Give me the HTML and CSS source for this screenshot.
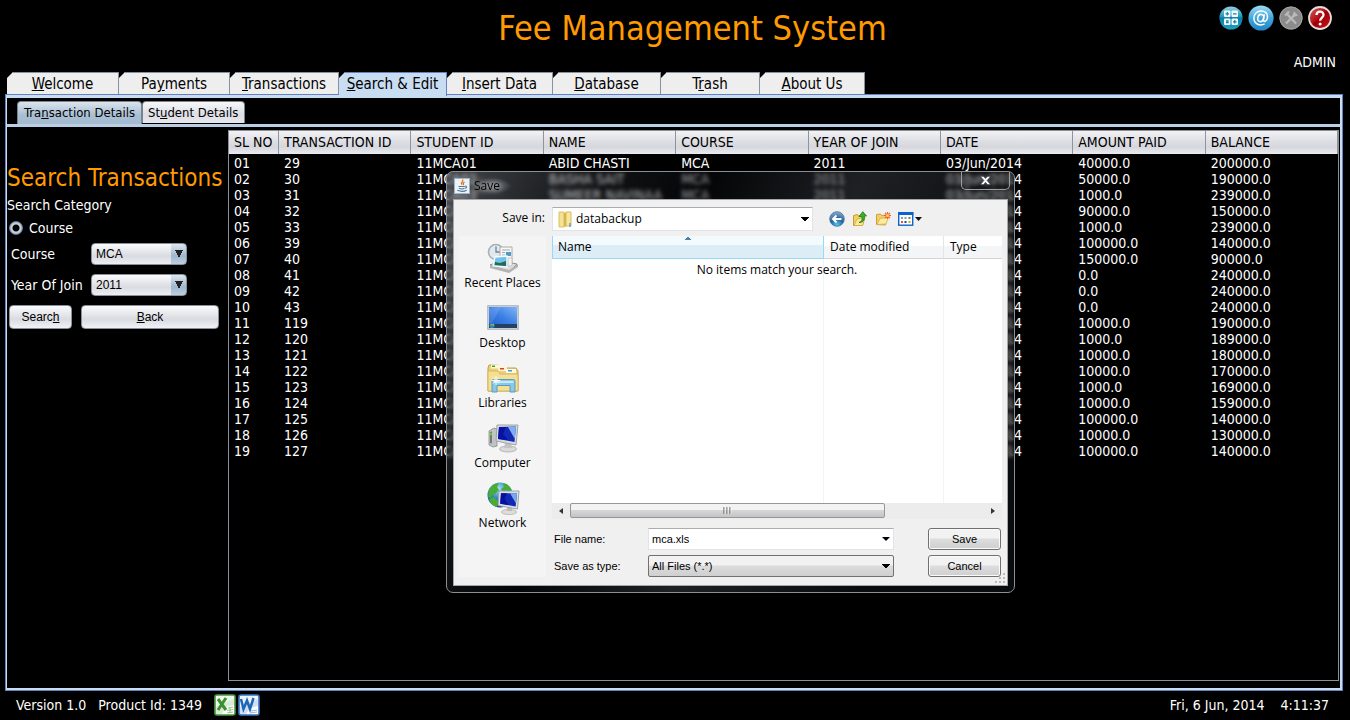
FILE: index.html
```html
<!DOCTYPE html>
<html lang="en">
<head>
<meta charset="utf-8">
<title>Fee Management System</title>
<link rel="stylesheet" href="styles.css">
</head>
<body>
<header class="top">
  <h1 class="title">Fee Management System</h1>
  <div class="tools">
    <button class="tool" type="button" aria-label="Calculator">
      <svg width="26" height="26" viewBox="0 0 26 26"><defs><linearGradient id="gc" x1="0" y1="0" x2="0" y2="1"><stop offset="0" stop-color="#8fd4e6"/><stop offset=".45" stop-color="#2294b8"/><stop offset=".5" stop-color="#0b7da6"/><stop offset="1" stop-color="#1ba3c6"/></linearGradient></defs><circle cx="13" cy="13" r="11.6" fill="url(#gc)"/><g fill="#f4fbfd"><rect x="6" y="5.500" width="6.500" height="6.500" rx="1"/><rect x="13.500" y="5.500" width="6.500" height="6.500" rx="1"/><rect x="6" y="13.500" width="6.500" height="6.500" rx="1"/><rect x="13.500" y="13.500" width="6.500" height="6.500" rx="1"/></g><path d="M7.500 8.800h3.600M9.300 7v3.600M15 8.800h3.600M15 16.800h3.600M16.800 15v3.600M8 16h2.700M8 17.700h2.700" stroke="#1784a9" stroke-width="1.300"/></svg>
    </button>
    <button class="tool" type="button" aria-label="Mail">
      <svg width="28" height="28" viewBox="0 0 28 28"><defs><linearGradient id="gm" x1="0" y1="0" x2="0" y2="1"><stop offset="0" stop-color="#9edcf8"/><stop offset=".5" stop-color="#42a7dc"/><stop offset="1" stop-color="#2385c6"/></linearGradient></defs><circle cx="14" cy="14" r="12.600" fill="url(#gm)"/><ellipse cx="13.700" cy="14" rx="2.900" ry="3.600" fill="none" stroke="#fff" stroke-width="1.500" transform="rotate(15 13.700 14)"/><path d="M17.300 10.300l-.9 5.300c-.3 2 1.300 2.200 2.500 1.100 3-3 1.900-9.300-4.300-9.700-4.700-.2-7.800 3.200-7.700 7.300.1 5.800 6.200 8.100 10.700 5.600" fill="none" stroke="#fff" stroke-width="1.500"/></svg>
    </button>
    <button class="tool" type="button" aria-label="Settings">
      <svg width="26" height="26" viewBox="0 0 26 26"><circle cx="13" cy="13" r="11.600" fill="#8b8b8b"/><circle cx="13" cy="13" r="11" fill="none" stroke="#a2a2a2"/><path d="M8 18.500l9-9M8.500 8.500l9.500 10" stroke="#b9b9b9" stroke-width="2.400"/><path d="M6.500 9.500l3.500-3.500 2 1-4.500 4.500zM16 6.200l-1.400 4 1.500 1.600 4-1.400" fill="#b9b9b9"/></svg>
    </button>
    <button class="tool" type="button" aria-label="Help">
      <svg width="26" height="26" viewBox="0 0 26 26"><defs><linearGradient id="gh" x1="0" y1="0" x2="1" y2="1"><stop offset="0" stop-color="#c66"/><stop offset=".45" stop-color="#b70d12"/><stop offset=".5" stop-color="#9b0006"/><stop offset="1" stop-color="#d4141a"/></linearGradient></defs><circle cx="13" cy="13" r="11" fill="url(#gh)" stroke="#e4dcdc" stroke-width="1.800"/><path d="M9.500 10c.2-4.700 7.200-4.400 7 0-.1 2.600-3.300 2.600-3.400 5.700" fill="none" stroke="#fff" stroke-width="2.300"/><circle cx="13.100" cy="18.900" r="1.500" fill="#fff"/></svg>
    </button>
  </div>
  <div class="user">ADMIN</div>
</header>

<nav class="tabs" role="tablist" aria-label="Sections">
  <button class="tab" role="tab" type="button"><u>W</u>elcome</button>
  <button class="tab" role="tab" type="button">Pa<u>y</u>ments</button>
  <button class="tab" role="tab" type="button"><u>T</u>ransactions</button>
  <button class="tab tab-on" role="tab" type="button" aria-selected="true"><u>S</u>earch &amp; Edit</button>
  <button class="tab" role="tab" type="button"><u>I</u>nsert Data</button>
  <button class="tab" role="tab" type="button"><u>D</u>atabase</button>
  <button class="tab" role="tab" type="button">T<u>r</u>ash</button>
  <button class="tab" role="tab" type="button"><u>A</u>bout Us</button>
</nav>

<main class="pane">
  <div class="subtabs" role="tablist" aria-label="Details">
    <button class="subtab subtab-on" role="tab" type="button" aria-selected="true">Tra<u>n</u>saction Details</button>
    <button class="subtab" role="tab" type="button">St<u>u</u>dent Details</button>
  </div>
  <div class="work">
    <form class="search">
      <h2 class="search-title">Search Transactions</h2>
      <p class="search-cat">Search Category</p>
      <label class="radio-row"><input class="radio" type="radio" name="category" checked>Course</label>
      <div class="field"><label for="course">Course</label><select class="combo" id="course"><option>MCA</option></select></div>
      <div class="field"><label for="year">Year Of Join</label><select class="combo" id="year"><option>2011</option></select></div>
      <div class="actions">
        <button class="btn btn-search" type="button">Searc<u>h</u></button>
        <button class="btn btn-back" type="button"><u>B</u>ack</button>
      </div>
    </form>
    <div class="grid-box">
      <table class="grid">
        <colgroup><col class="col-no"><col><col><col><col><col><col><col><col></colgroup>
        <thead><tr><th>SL NO</th><th>TRANSACTION ID</th><th>STUDENT ID</th><th>NAME</th><th>COURSE</th><th>YEAR OF JOIN</th><th>DATE</th><th>AMOUNT PAID</th><th>BALANCE</th></tr></thead>
        <tbody>
          <tr><td>01</td><td>29</td><td>11MCA01</td><td>ABID CHASTI</td><td>MCA</td><td>2011</td><td>03/Jun/2014</td><td>40000.0</td><td>200000.0</td></tr>
          <tr><td>02</td><td>30</td><td>11MCA02</td><td>BASHA SAIT</td><td>MCA</td><td>2011</td><td>03/Jun/2014</td><td>50000.0</td><td>190000.0</td></tr>
          <tr><td>03</td><td>31</td><td>11MCA03</td><td>SUMEER NAVINAA</td><td>MCA</td><td>2011</td><td>03/Jun/2014</td><td>1000.0</td><td>239000.0</td></tr>
          <tr><td>04</td><td>32</td><td>11MCA04</td><td></td><td>MCA</td><td>2011</td><td>03/Jun/2014</td><td>90000.0</td><td>150000.0</td></tr>
          <tr><td>05</td><td>33</td><td>11MCA05</td><td></td><td>MCA</td><td>2011</td><td>03/Jun/2014</td><td>1000.0</td><td>239000.0</td></tr>
          <tr><td>06</td><td>39</td><td>11MCA06</td><td></td><td>MCA</td><td>2011</td><td>03/Jun/2014</td><td>100000.0</td><td>140000.0</td></tr>
          <tr><td>07</td><td>40</td><td>11MCA07</td><td></td><td>MCA</td><td>2011</td><td>03/Jun/2014</td><td>150000.0</td><td>90000.0</td></tr>
          <tr><td>08</td><td>41</td><td>11MCA08</td><td></td><td>MCA</td><td>2011</td><td>03/Jun/2014</td><td>0.0</td><td>240000.0</td></tr>
          <tr><td>09</td><td>42</td><td>11MCA09</td><td></td><td>MCA</td><td>2011</td><td>03/Jun/2014</td><td>0.0</td><td>240000.0</td></tr>
          <tr><td>10</td><td>43</td><td>11MCA10</td><td></td><td>MCA</td><td>2011</td><td>03/Jun/2014</td><td>0.0</td><td>240000.0</td></tr>
          <tr><td>11</td><td>119</td><td>11MCA11</td><td></td><td>MCA</td><td>2011</td><td>03/Jun/2014</td><td>10000.0</td><td>190000.0</td></tr>
          <tr><td>12</td><td>120</td><td>11MCA12</td><td></td><td>MCA</td><td>2011</td><td>03/Jun/2014</td><td>1000.0</td><td>189000.0</td></tr>
          <tr><td>13</td><td>121</td><td>11MCA13</td><td></td><td>MCA</td><td>2011</td><td>03/Jun/2014</td><td>10000.0</td><td>180000.0</td></tr>
          <tr><td>14</td><td>122</td><td>11MCA14</td><td></td><td>MCA</td><td>2011</td><td>03/Jun/2014</td><td>10000.0</td><td>170000.0</td></tr>
          <tr><td>15</td><td>123</td><td>11MCA15</td><td></td><td>MCA</td><td>2011</td><td>03/Jun/2014</td><td>1000.0</td><td>169000.0</td></tr>
          <tr><td>16</td><td>124</td><td>11MCA16</td><td></td><td>MCA</td><td>2011</td><td>03/Jun/2014</td><td>10000.0</td><td>159000.0</td></tr>
          <tr><td>17</td><td>125</td><td>11MCA17</td><td></td><td>MCA</td><td>2011</td><td>03/Jun/2014</td><td>100000.0</td><td>140000.0</td></tr>
          <tr><td>18</td><td>126</td><td>11MCA18</td><td></td><td>MCA</td><td>2011</td><td>03/Jun/2014</td><td>10000.0</td><td>130000.0</td></tr>
          <tr><td>19</td><td>127</td><td>11MCA19</td><td></td><td>MCA</td><td>2011</td><td>03/Jun/2014</td><td>100000.0</td><td>140000.0</td></tr>
        </tbody>
      </table>
    </div>
  </div>
</main>

<footer class="status">
  <span>Version 1.0</span>
  <span>Product Id: 1349</span>
  <div class="exports">
    <button class="export" type="button" aria-label="Export to Excel"><svg width="22" height="22" viewBox="0 0 22 22"><rect x="1" y="1" width="20" height="20" rx="2" fill="#d7ecd2" stroke="#4c9a45" stroke-width="1.600"/><path d="M2 2h18v3l-18 8z" fill="#eef8ec"/><path d="M12 13l8-2v9H8z" fill="#fff"/><path d="M14 14l5-1M13 16.500l6-1M13 19l6-1M16 13v6" stroke="#7fb57a" stroke-width=".8"/><path d="M4 5l8 11M12 4L4 16" stroke="#3b9130" stroke-width="3"/></svg></button>
    <button class="export" type="button" aria-label="Export to Word"><svg width="22" height="22" viewBox="0 0 22 22"><rect x="1" y="1" width="20" height="20" rx="2" fill="#cfe0f5" stroke="#3c78bd" stroke-width="1.600"/><path d="M2 2h18v3l-18 8z" fill="#ecf4fd"/><path d="M12 14l8-2v8H8z" fill="#fff"/><path d="M13 17l6-1M12 19l7-1" stroke="#8cb1de" stroke-width=".9"/><path d="M3 5l2.500 10L9 6.500l3 8.500 3.500-11" fill="none" stroke="#1f66b4" stroke-width="2.500"/></svg></button>
  </div>
  <span class="date">Fri, 6 Jun, 2014</span>
  <span>4:11:37</span>
</footer>

<section class="dialog" role="dialog" aria-label="Save">
  <div class="dlg-title">
    <svg width="16" height="16" viewBox="0 0 16 16"><rect x=".5" y=".5" width="15" height="15" fill="#eef2f6" stroke="#9fb4c6"/><path d="M8.600 1.500c1.500 2-2.700 3-.8 5.200M10.600 4c-2.300 1-1.300 2-1 3.200" fill="none" stroke="#e5701c" stroke-width="1.300"/><path d="M4.500 8.500h6.300M5 10.200c1.500.8 4 .8 5.500 0M11 8.300c2-.6 2 1.600 0 2M3.300 12.300c3 1.300 7 1.200 9.300 0" fill="none" stroke="#4c7899" stroke-width="1.100"/></svg>
    <span class="dlg-name">Save</span>
    <button class="dlg-close" type="button" aria-label="Close"><svg width="11" height="9" viewBox="0 0 11 9"><path d="M.5.500h3L5.500 2.600 7.500.500h3L7 4.500l3.500 4h-3l-2-2.200-2 2.200h-3L4 4.500z" fill="#fff" stroke="#3a3d44" stroke-width=".5"/></svg></button>
  </div>
  <div class="dlg-body">
    <label class="in-label" for="folder">Save in:</label>
    <div class="in-row">
      <div class="folder-box">
        <svg width="15" height="17" viewBox="0 0 15 17"><path d="M1 1h5v15H1z" fill="#f4e193" stroke="#dcc169"/><path d="M6 2l3-1v14l-3 1z" fill="#d6b449"/><path d="M8 1h5v14H8z" fill="#f7e79f" stroke="#dabb58"/><path d="M12 12v4" stroke="#5aa5dc" stroke-width="1.500"/></svg>
        <select class="folder" id="folder"><option>databackup</option></select>
      </div>
      <div class="nav-icons">
        <button class="ico" type="button" aria-label="Back"><svg width="16" height="16" viewBox="0 0 16 16"><defs><radialGradient id="gb" cx=".5" cy=".9" r=".9"><stop offset="0" stop-color="#55c5ee"/><stop offset=".5" stop-color="#245f9e"/><stop offset="1" stop-color="#8fb1cc"/></radialGradient></defs><circle cx="8" cy="8" r="7.300" fill="url(#gb)" stroke="#466e94" stroke-width=".8"/><path d="M12.500 8H4M7.500 4.500L4 8l3.500 3.500" fill="none" stroke="#fff" stroke-width="2"/></svg></button>
        <button class="ico" type="button" aria-label="Up one level"><svg width="16" height="16" viewBox="0 0 16 16"><path d="M1.500 14.500v-10l4-1 1 1.500 5-1v3l1 .5-2 7z" fill="#f0cf66" stroke="#c99c2c"/><path d="M2 14.500l3-6.500 8-1.500-2.500 8z" fill="#fbe795" stroke="#d2aa40" stroke-width=".8"/><path d="M7 11.500c3-1 3.500-3 2.700-6H7L10.800.700 14.500 5h-2.200c.5 4-1 6.500-5.300 6.500z" fill="#39b02e" stroke="#167716" stroke-width=".8"/></svg></button>
        <button class="ico" type="button" aria-label="New folder"><svg width="16" height="16" viewBox="0 0 16 16"><path d="M1.500 13.500v-10l4-.5 1 1.500 5-.5v3l-1 7z" fill="#f0cf66" stroke="#d0a038"/><path d="M2 13.500l3-6 8.500-1-2.500 6.500z" fill="#fcea9e" stroke="#d7b04b" stroke-width=".8"/><path d="M12.500 1v7M9 4.500h7M10 2l5 5M15 2l-5 5" stroke="#f1602b" stroke-width="1.200"/><circle cx="12.500" cy="4.500" r="1.500" fill="#ffd36a"/></svg></button>
        <button class="ico" type="button" aria-label="Views"><svg width="24" height="16" viewBox="0 0 24 16"><rect x=".7" y="1.700" width="14" height="12.500" fill="#fff" stroke="#0d62d0" stroke-width="1.400"/><path d="M0 2.500h15.400" stroke="#0d62d0" stroke-width="3"/><path d="M3 6h2v2H3zM6.500 6h2v2h-2z" fill="#8aa0b8"/><path d="M10.500 6h2v2h-2z" fill="#4d9a37"/><path d="M3 10h2v2H3z" fill="#d65c2a"/><path d="M6.500 10h2v2h-2z" fill="#283f9e"/><path d="M10.500 10h2v2h-2z" fill="#d6a32a"/><path d="M17 6h7l-3.500 4z" fill="#111"/></svg></button>
      </div>
    </div>

    <nav class="places" aria-label="Places">
      <button class="place" type="button"><svg width="32" height="32" viewBox="0 0 32 32"><circle cx="9" cy="10" r="7.500" fill="#e2e9ee" stroke="#a3b1bb" stroke-width="1.600"/><path d="M9 4.500V10h4.500" fill="none" stroke="#6a8496" stroke-width="1.300"/><path d="M3 23l10-4 17 3-8 8z" fill="#dedede" stroke="#8c8c8c"/><path d="M3 23v3l19 5v-3zM22 28v3l9-6v-3z" fill="#b3b3b3"/><path d="M13 5h12v17H13z" fill="#f8f8f8" stroke="#aaa"/><path d="M15 8h8M15 10.500h3M15 13h3" stroke="#9aa"/><path d="M19 10h5v4h-5z" fill="#4b9bc2"/><path d="M8 15l12-1v11L6 24z" fill="#6fc3ec" stroke="#f8fafc" stroke-width="1.300"/><path d="M8 20l5 1 6-2v5l-11-1z" fill="#236c4e"/><path d="M21 16h4v8h-4z" fill="#f3f3f3" stroke="#b9b9b9" stroke-width=".7"/></svg><span>Recent Places</span></button>
      <button class="place" type="button"><svg width="32" height="32" viewBox="0 0 32 32"><defs><linearGradient id="gd" x1="0" y1="1" x2="1" y2="0"><stop offset="0" stop-color="#1f5fce"/><stop offset=".5" stop-color="#3f82e6"/><stop offset="1" stop-color="#82b4f5"/></linearGradient></defs><rect x=".8" y="3.800" width="30.400" height="23.400" fill="#d4dbe2" stroke="#9fabb6"/><rect x="2" y="5" width="28" height="18" fill="url(#gd)"/><path d="M2 6l12-1-9 16H2z" fill="#fff" opacity=".12"/><rect x="2" y="22" width="28" height="4" fill="#27405f"/><circle cx="5" cy="23.500" r="2.600" fill="#2687ba"/><path d="M3.500 22h1.500v1.500H3.500z" fill="#ef7b3a"/><path d="M5.500 22H7v1.500H5.500z" fill="#8ccf46"/></svg><span>Desktop</span></button>
      <button class="place" type="button"><svg width="34" height="32" viewBox="0 0 34 32"><path d="M2 29V6l1-3h9l2 3h16l2 3v20z" fill="#ead07b" stroke="#c5a04a"/><path d="M5 2.500h9v4H5z" fill="#fff6d0"/><path d="M6 3.500h3v1.500H6z" fill="#2fae35"/><path d="M12 5h9v4h-9z" fill="#fff6d0"/><path d="M14 6h4v1.500h-4z" fill="#d9452c"/><path d="M20 7h10v4H20z" fill="#fffbe8"/><path d="M22 8h4v1.500h-4z" fill="#3d9be0"/><path d="M2 9h10l2 3h18v17H2z" fill="#f5df92" stroke="#d1ad56" stroke-width=".8"/><path d="M6 30V19q0-1.500 1.500-1.500h20Q29 17.500 29 19v11h-5v-6.500H11V30z" fill="#8ac8e6" stroke="#579cc2"/><path d="M7.500 20h20" stroke="#d7f0fa" stroke-width="1.600"/><path d="M10 14v9M5.500 18.500h9M7 15.500l6 6M13 15.500l-6 6" stroke="#fff" stroke-width=".9"/></svg><span>Libraries</span></button>
      <button class="place" type="button"><svg width="32" height="32" viewBox="0 0 32 32"><path d="M2 9l5-3 3 1v17l-4 1-4-2z" fill="#bfc3c5" stroke="#888d90" stroke-width=".8"/><path d="M3 10l2-.5v12L3 21z" fill="#777"/><circle cx="4" cy="12" r="1.300" fill="#67d91f"/><ellipse cx="21" cy="27" rx="8.500" ry="3" fill="#dadada" stroke="#a1a1a1" stroke-width=".7"/><path d="M18 21h6l1 5h-8z" fill="#c3c3c3"/><path d="M10 3l21 0-2 20-20-4z" fill="#d8dbde" stroke="#9ea4aa"/><path d="M12 5l17-.500L27.500 20 11 17z" fill="#1329b6"/><path d="M12 5l7 0-3 7 5 6L11 17z" fill="#0712a3"/><path d="M21 5l8-.300-1.300 12z" fill="#7faef2"/></svg><span>Computer</span></button>
      <button class="place" type="button"><svg width="34" height="34" viewBox="0 0 34 34"><defs><radialGradient id="gn" cx=".45" cy=".25" r=".8"><stop offset="0" stop-color="#a4def4"/><stop offset=".5" stop-color="#2f83bf"/><stop offset="1" stop-color="#0b3c83"/></radialGradient></defs><circle cx="14" cy="14" r="12.500" fill="url(#gn)"/><path d="M3 9c2-4 6-7 10-7l-2 4 2 3-4 4-3 1-1 3-3-1zM17 2c5 1 8 4 9 8l-5-1-4 2-2-3 3-2zM3 18l5-2 4 4-1 6c-4-1-7-4-8-8z" fill="#47ad37"/><ellipse cx="23" cy="31" rx="7.500" ry="2.600" fill="#ddd" stroke="#aaa" stroke-width=".7"/><path d="M21 26h5v4h-5z" fill="#bbb"/><path d="M13 10l20 0L31.500 28 12 24.500z" fill="#dde1e4" stroke="#9ca5ac"/><path d="M15 12.300l16 0-1.300 13.200L14.200 22.700z" fill="#1329b6"/><path d="M15 12.300l6 0-2.500 5.500 4 6.300-8.300-1.400z" fill="#0611a0"/><path d="M24 12.300l7 0-1.200 10z" fill="#78a8ef"/></svg><span>Network</span></button>
    </nav>

    <div class="files">
      <table class="list">
        <colgroup><col class="c-name"><col class="c-date"><col></colgroup>
        <thead><tr><th class="sorted">Name</th><th>Date modified</th><th>Type</th></tr></thead>
        <tbody><tr><td></td><td></td><td></td></tr></tbody>
      </table>
      <p class="empty">No items match your search.</p>
      <div class="scroll">
        <button class="arrow" type="button" aria-label="Scroll left"><svg width="4" height="6" viewBox="0 0 4 6"><path d="M4 0v6L0 3z" fill="#333"/></svg></button>
        <div class="track"><div class="thumb"><svg width="9" height="7" viewBox="0 0 9 7"><path d="M1 0v7M4 0v7M7 0v7" stroke="#555"/><path d="M2 0v7M5 0v7M8 0v7" stroke="#fff" opacity=".7"/></svg></div></div>
        <button class="arrow" type="button" aria-label="Scroll right"><svg width="4" height="6" viewBox="0 0 4 6"><path d="M0 0v6l4-3z" fill="#333"/></svg></button>
      </div>
      <div class="save-form">
        <label for="fname">File name:</label>
        <div class="name-box"><input class="name" id="fname" type="text" value="mca.xls"><button class="drop" type="button" aria-label="Show names"><svg width="8" height="4" viewBox="0 0 8 4"><path d="M0 0h8L4 4z"/></svg></button></div>
        <button class="wbtn" type="button">Save</button>
        <label for="ftype">Save as type:</label>
        <div class="type-box"><select class="type" id="ftype"><option>All Files (*.*)</option></select></div>
        <button class="wbtn" type="button">Cancel</button>
      </div>
    </div>
    <svg class="grip" width="10" height="10" viewBox="0 0 10 10"><path d="M8 0h2v2H8zM8 4h2v2H8zM4 4h2v2H4zM0 8h2v2H0zM4 8h2v2H4zM8 8h2v2H8z" fill="#bbb"/></svg>
  </div>
</section>
</body>
</html>
```
FILE: styles.css
```css
* { box-sizing: border-box; }
body {
  margin: 0;
  min-height: 100vh;
  display: flex;
  flex-direction: column;
  background: #000;
  color: #fff;
  font: 14px/16px "DejaVu Sans Condensed", "Noto Sans", sans-serif;
}
button, input, select { font: inherit; color: inherit; margin: 0; }
button { padding: 0; border: 0; background: none; }
h1, h2, p { margin: 0; font-weight: normal; }

.top {
  height: 72px;
  display: grid;
  grid-template-columns: 1fr auto 1fr;
  grid-template-rows: 52px 20px;
  padding: 0 14px 0 49px;
}
.title { grid-column: 2; color: #ff9a00; font-size: 34px; line-height: 56px; white-space: nowrap; }
.tools { grid-column: 3; justify-self: end; display: flex; gap: 3px; align-items: center; padding-top: 4px; margin-right: 3px; height: 32px; }
.tool { display: flex; }
.user { grid-column: 3; justify-self: end; line-height: 20px; }

.tabs { display: flex; padding-left: 7px; height: 22px; }
.tab {
  width: 108px;
  background: #eee;
  border: 0 solid #8393a5;
  border-width: 1px 1px 0 0;
  color: #000;
  font-size: 15px;
  line-height: 22px;
  white-space: nowrap;
  clip-path: polygon(6px 0, 100% 0, 100% 100%, 0 100%, 0 6px);
}
.tab:nth-child(1) { width: 112px; }
.tab:nth-child(2) { width: 111px; }
.tab:nth-child(3) { width: 109px; }
.tab:nth-child(5) { width: 106px; }
.tab:nth-child(7) { width: 99px; }
.tab:nth-child(8) { width: 105px; }
.tab-on { background: #c8ddf2; border-color: #6382bf; height: 24px; padding-bottom: 2px; position: relative; z-index: 1; }

.pane {
  flex: 1;
  display: flex;
  flex-direction: column;
  margin: 0 7px 0 5px;
  border: 1px solid #6382bf;
  box-shadow: inset 0 0 0 1px #c8ddf2, inset 0 3px 0 #c8ddf2, inset -2px -2px 0 #c8ddf2;
  padding: 6px 3px 9px 1px;
}
.subtabs { display: flex; padding-left: 10px; height: 26px; border-bottom: 3px solid #b8cfe5; margin-right: -1px; }
.subtab {
  height: 22px;
  padding: 0 6px 0 5px;
  border: 1px solid #77838f;
  border-bottom: 0;
  border-radius: 4px 4px 0 0;
  background: linear-gradient(#f8f8fa, #dcdee4 60%, #e6e8ee);
  color: #000;
  font-size: 13px;
  white-space: nowrap;
}
.subtab-on { height: 23px; padding: 0 6px 1px; background: linear-gradient(#dbe4ed, #a9bed2 60%, #a5bbd0); }

.work { flex: 1; display: flex; padding-top: 3px; }
.search { width: 221px; flex: none; padding-top: 34px; }
.search-title { color: #ff9a00; font-size: 24px; line-height: 28px; white-space: nowrap; }
.search-cat { padding: 5px 0 6px; }
.radio-row { display: flex; gap: 6px; align-items: center; padding-left: 2px; height: 17px; margin-bottom: 2px; }
.radio {
  appearance: none;
  width: 14px;
  height: 14px;
  margin: 0;
  border-radius: 50%;
  border: 1px solid #6b7f95;
  background: radial-gradient(circle, #000 3px, #cfdae6 4px, #93a9bf 7px);
}
.field { display: flex; align-items: center; height: 31px; padding-left: 4px; }
.field label { width: 80px; white-space: nowrap; }
.combo {
  appearance: none;
  width: 96px;
  height: 22px;
  padding: 0 4px;
  border: 1px solid #8a909a;
  border-radius: 4px;
  background:
    linear-gradient(to bottom left, transparent 50%, #222 51%) right 3px center / 4px 8px no-repeat,
    linear-gradient(to bottom right, transparent 50%, #222 51%) right 7px center / 4px 8px no-repeat,
    linear-gradient(#dce6f0, #9fb6cd 60%, #bdd0e2) right / 15px 100% no-repeat,
    linear-gradient(#fbfbfd, #d9dbe1 60%, #eceef4);
  background-image:
    linear-gradient(to bottom right, #222 50%, transparent 51%),
    linear-gradient(to bottom left, #222 50%, transparent 51%),
    linear-gradient(#dce6f0, #9fb6cd 60%, #bdd0e2),
    linear-gradient(#fbfbfd, #d9dbe1 60%, #eceef4);
  color: #000;
  font: 12px/20px "Liberation Sans", Arial, sans-serif;
}
.actions { display: flex; gap: 9px; padding: 5px 0 0 2px; }
.btn {
  height: 24px;
  border: 1px solid #8a909a;
  border-radius: 4px;
  background: linear-gradient(#fbfbfd, #d9dbe1 60%, #f0f2f8);
  color: #000;
  font: 12px/20px "Liberation Sans", Arial, sans-serif;
}
.btn-search { width: 63px; }
.btn-back { width: 138px; }

.grid-box { flex: 1; border: 1px solid #8a8f99; }
.grid { width: 100%; table-layout: fixed; border-collapse: separate; border-spacing: 0; }
.col-no { width: 50px; }
.grid th {
  height: 23px;
  padding: 0 5px 1px;
  border-right: 1px solid #8f939b;
  background: linear-gradient(#f2f2f5, #dcdde2 50%, #d5d7dd 70%, #e9ebf1);
  color: #000;
  font-weight: normal;
  text-align: left;
  white-space: nowrap;
}
.grid tbody::before { content: ""; display: block; height: 1px; }
.grid td { height: 16px; padding: 0 5px; line-height: 16px; white-space: nowrap; }

.status { display: flex; align-items: center; gap: 12px; height: 29px; padding: 0 21px 2px 16px; }
.exports { display: flex; gap: 2px; }
.export { display: flex; }
.date { margin-left: auto; padding-right: 4px; }

.dialog {
  position: absolute;
  left: 446px;
  top: 171px;
  width: 569px;
  padding: 0 6px 6px;
  border: 1px solid #8c9095;
  border-radius: 7px;
  background:
    linear-gradient(115deg, rgba(130, 138, 148, .5), rgba(50, 54, 60, .35) 20%, rgba(10, 12, 16, .45) 35%, rgba(60, 64, 70, .5) 55%, rgba(50, 54, 60, .2) 80%);
  backdrop-filter: blur(2px);
  color: #000;
  font: 12px/16px "Open Sans", "Noto Sans", sans-serif;
}
.dlg-title { display: flex; align-items: center; gap: 4px; height: 27px; padding-left: 1px; }
.dlg-name { padding: 0 12px 0 0; background: radial-gradient(closest-side, rgba(170, 176, 184, .6), transparent); text-shadow: 0 0 6px #bbb, 0 0 9px #bbb; }
.dlg-close {
  display: flex;
  justify-content: center;
  align-items: center;
  align-self: flex-start;
  width: 49px;
  height: 18px;
  margin: 0 -2px 0 auto;
  border: 1px solid #9a9ea3;
  border-top: 0;
  border-radius: 0 0 5px 5px;
}
.dlg-body {
  position: relative;
  display: grid;
  grid-template-columns: 87px 1fr;
  column-gap: 6px;
  row-gap: 5px;
  padding: 7px 5px 8px;
  border: 1px solid #a5a8ab;
  background: #f0f0f0;
}
.in-label { text-align: right; line-height: 22px; padding-right: 1px; }
.in-row { display: flex; gap: 16px; align-items: center; }
.folder-box { display: flex; align-items: center; width: 261px; height: 24px; padding-left: 5px; background: #fff; border: 1px solid #e2e3ea; border-top-color: #abadb3; }
.folder, .type {
  appearance: none;
  border: 0;
  padding: 0 4px 0 3px;
  background:
    linear-gradient(to bottom right, #000 50%, transparent 51%) right 3px center / 4px 4px no-repeat,
    linear-gradient(to bottom left, #000 50%, transparent 51%) right 7px center / 4px 4px no-repeat;
}
.folder { flex: 1; height: 22px; }
.nav-icons { display: flex; gap: 7px; }
.ico { display: flex; }
.places { display: flex; flex-direction: column; background: #f4f4f4; padding-top: 5px; }
.place { display: flex; flex-direction: column; align-items: center; height: 60px; line-height: 16px; white-space: nowrap; }
.place svg { flex: none; height: 34px; }
.files { position: relative; min-width: 0; }
.list { width: 100%; height: 267px; table-layout: fixed; border-spacing: 0; background: #fff; }
.c-name { width: 272px; }
.c-date { width: 120px; }
.list th {
  height: 23px;
  padding: 0 6px;
  border-right: 1px solid #e2e6ec;
  border-bottom: 1px solid #d5d5d5;
  background: linear-gradient(#fff 45%, #f4f5f7 45%);
  font-weight: normal;
  text-align: left;
}
.list .sorted {
  border: 1px solid #96d9f9;
  border-top: 0;
  padding-left: 5px;
  background:
    linear-gradient(to bottom right, transparent 50%, #4a83a8 50%) 131px 1px / 4px 3px no-repeat,
    linear-gradient(to bottom left, transparent 50%, #4a83a8 50%) 135px 1px / 4px 3px no-repeat,
    linear-gradient(#f3fafe 40%, #dcedf6 40%);
}
.list td { border-right: 1px solid #edf4fa; }
.list th:last-child, .list td:last-child { border-right: 0; }
.empty { position: absolute; top: 26px; left: 0; width: 100%; text-align: center; }
.scroll { display: flex; height: 16px; background: #ececec; }
.arrow { width: 18px; display: flex; align-items: center; justify-content: center; }
.track { flex: 1; }
.thumb {
  width: 76%;
  height: 15px;
  display: flex;
  align-items: center;
  justify-content: center;
  border: 1px solid #979797;
  border-radius: 2px;
  background: linear-gradient(#f3f3f3 45%, #d6d6d8 50%, #c4c4c6);
}
.save-form {
  display: grid;
  grid-template-columns: 94px 246px 1fr;
  row-gap: 5px;
  align-items: center;
  padding: 9px 1px 0 2px;
  font: 11px/16px "Liberation Sans", Arial, sans-serif;
}
.name-box { display: flex; height: 22px; background: #fff; border: 1px solid #e2e3ea; border-top-color: #abadb3; }
.name { flex: 1; min-width: 0; border: 0; padding: 0 3px; background: transparent; }
.drop { width: 14px; display: flex; align-items: center; justify-content: center; }
.type-box { border: 1px solid #707070; border-radius: 2px; background: linear-gradient(#f2f2f2 45%, #dcdcdc 50%, #cfcfcf); }
.type { width: 100%; height: 20px; display: block; }
.wbtn { justify-self: end; width: 73px; height: 22px; border: 1px solid #707070; border-radius: 3px; background: linear-gradient(#f2f2f2 45%, #dddddd 50%, #cfcfcf); box-shadow: inset 0 0 0 1px #fafafa; }
.grip { position: absolute; right: 2px; bottom: 2px; }
```
